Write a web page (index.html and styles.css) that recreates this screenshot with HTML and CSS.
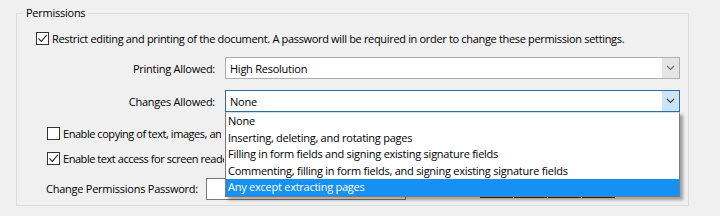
FILE: index.html
```html
<!DOCTYPE html>
<html lang="en">

<head>
     <meta charset="UTF-8">
     <meta name="viewport" content="width=device-width, initial-scale=1.0">
     <title>Permissions</title>
     <link rel="stylesheet" href="styles.css">
</head>

<body>
     <div class="group">
          <div class="legend">Permissions</div>

          <div class="row check first">
               <span class="box on">
                    <svg width="11" height="11" viewBox="0 0 11 11"><path d="M1.5 5.5 L4.3 8.3 L9.8 1.8" fill="none" stroke="#333" stroke-width="1.2"/></svg>
               </span>
               <span class="long">Restrict editing and printing of the document. A password will be required in order to change these permission settings.</span>
          </div>

          <div class="row field printing">
               <label>Printing Allowed:</label>
               <div class="select">
                    <span class="value">High Resolution</span>
                    <span class="arrow">
                         <svg width="9" height="6" viewBox="0 0 9 6"><path d="M1 1 L4.5 4.5 L8 1" fill="none" stroke="#707070" stroke-width="1.1"/></svg>
                    </span>
               </div>
          </div>

          <div class="row field changes">
               <label>Changes Allowed:</label>
               <div class="select active">
                    <span class="value">None</span>
                    <span class="arrow">
                         <svg width="9" height="6" viewBox="0 0 9 6"><path d="M1 1 L4.5 4.5 L8 1" fill="none" stroke="#404040" stroke-width="1.1"/></svg>
                    </span>
                    <ul class="list">
                         <li>None</li>
                         <li>Inserting, deleting, and rotating pages</li>
                         <li>Filling in form fields and signing existing signature fields</li>
                         <li>Commenting, filling in form fields, and signing existing signature fields</li>
                         <li class="selected">Any except extracting pages</li>
                    </ul>
               </div>
          </div>

          <!-- these two labels sit under the open list, only their start shows -->
          <div class="row check copy">
               <span class="box"></span>
               <span class="cut">Enable copying of text, images, an</span>
          </div>

          <div class="row check reader">
               <span class="box on">
                    <svg width="11" height="11" viewBox="0 0 11 11"><path d="M1.5 5.5 L4.3 8.3 L9.8 1.8" fill="none" stroke="#333" stroke-width="1.2"/></svg>
               </span>
               <span class="cut">Enable text access for screen reade</span>
          </div>

          <div class="row password">
               <label>Change Permissions Password:</label>
               <input type="password" class="pass">
               <div class="strip"><span></span><span></span><span></span><span></span></div>
          </div>
     </div>
</body>

</html>
```

FILE: styles.css
```css
body {
     margin: 0;
     background: #f0f0f0;
     font-family: 'Open Sans', 'Noto Sans', sans-serif;
     font-size: 11px;
     letter-spacing: -0.25px;
     color: #000;
     width: 720px;
     height: 216px;
     overflow: hidden;
}

.group {
     margin: 13px 0 0 16px;
     width: 671px;
     height: 191px;
     border: 1px solid #dcdcdc;
}

.legend {
     margin: -9px 0 0 6px;
     padding: 0 3px;
     width: fit-content;
     line-height: 16px;
     background: #f0f0f0;
}

.row {
     display: flex;
     align-items: center;
     white-space: nowrap;
}

.check {
     height: 16px;
     gap: 3px;
}

.long {
     letter-spacing: -0.33px;
}

.box {
     width: 11px;
     height: 11px;
     border: 1px solid #333;
     background: #fff;
     display: flex;
}

.cut {
     max-width: 161px;
     letter-spacing: -0.45px;
     overflow: hidden;
}

.first {
     margin: 9px 0 0 19px;
}

.copy {
     margin: 13px 0 0 30px;
}

.reader {
     margin: 9px 0 0 30px;
}

.field {
     height: 22px;
     margin-top: 11px;
}

.field label {
     width: 198px;
     text-align: right;
     margin-right: 10px;
}

.select {
     position: relative;
     width: 455px;
     height: 22px;
     box-sizing: border-box;
     border: 1px solid #adadad;
     background: #fff;
     display: flex;
     align-items: center;
}

.select .value {
     flex: 1;
     padding-left: 4px;
}

.select .arrow {
     width: 17px;
     height: 20px;
     background: #e5e5e5;
     display: flex;
     align-items: center;
     justify-content: center;
}

.select.active {
     border-color: #2e6da4;
}

.select.active .arrow {
     background: #cce4f7;
}

.list {
     position: absolute;
     top: 21px;
     left: -1px;
     width: 455px;
     margin: 0;
     padding: 0;
     list-style: none;
     box-sizing: border-box;
     background: #fff;
     border: 1px solid #7a7a7a;
     border-top-color: #c8e0f4;
     box-shadow: 3px 3px 3px rgba(0, 0, 0, 0.35);
     z-index: 2;
}

.list li {
     height: 16.6px;
     line-height: 16.6px;
     padding-left: 2px;
}

.list li.selected {
     background: #1690f2;
     color: #fff;
}

.password {
     position: relative;
     height: 20px;
     margin: 12px 0 0 29px;
}

.password label {
     width: 160px;
}

.pass {
     width: 200px;
     height: 22px;
     box-sizing: border-box;
     border: 1px solid #7a7a7a;
     margin: 2px 0 0 0;
     padding: 0;
     background: #fff;
}

.strip {
     position: absolute;
     left: 434px;
     top: 18px;
     display: flex;
     gap: 1px;
}

.strip span {
     width: 33px;
     height: 2px;
     background: #303030;
}
```
